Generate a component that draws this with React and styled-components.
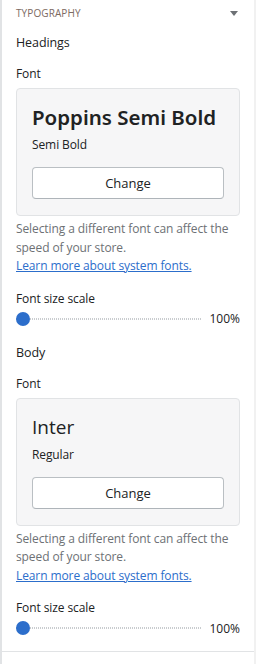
import styled, { createGlobalStyle } from "styled-components";

const GlobalStyle = createGlobalStyle`
	html, body {
		margin: 0;
		padding: 0;
		background: #f1f1f1;
	}
	body {
		font-family: "Open Sans", "Noto Sans", sans-serif;
		color: #202223;
	}
`;

function FontCard({ name, weight, heavy }) {
	return (
		<Card>
			<FontName $heavy={heavy}>{name}</FontName>
			<FontWeight>{weight}</FontWeight>
			<ChangeButton type="button">Change</ChangeButton>
		</Card>
	);
}

function Scale() {
	return (
		<SliderRow>
			<Track>
				<Thumb />
			</Track>
			<SliderValue>100%</SliderValue>
		</SliderRow>
	);
}

function FontGroup({ title, name, weight, heavy }) {
	return (
		<Group>
			<GroupTitle>{title}</GroupTitle>
			<Label>Font</Label>
			<FontCard name={name} weight={weight} heavy={heavy} />
			<Help>
				Selecting a different font can affect the speed of your store.
				<br />
				<a href="#fonts">Learn more about system fonts.</a>
			</Help>
			<Label $tight>Font size scale</Label>
			<Scale />
		</Group>
	);
}

function App() {
	return (
		<>
			<GlobalStyle />
			<Panel>
				<Header>
					<span>Typography</span>
					<Caret />
				</Header>
				<FontGroup title="Headings" name="Poppins Semi Bold" weight="Semi Bold" heavy />
				<FontGroup title="Body" name="Inter" weight="Regular" />
				<Divider />
			</Panel>
		</>
	);
}

const Panel = styled.div`
	width: 254px;
	height: 664px;
	box-sizing: border-box;
	background: #ffffff;
	border-left: 2px solid #e1e3e5;
	padding: 0 14px;
	overflow: hidden;
`;

const Header = styled.div`
	display: flex;
	justify-content: space-between;
	align-items: center;
	height: 26px;
	font-size: 10px;
	text-transform: uppercase;
	color: #7c6a62;
	letter-spacing: 0.1px;
`;

const Caret = styled.span`
	width: 0;
	height: 0;
	margin-right: 2px;
	border-left: 4px solid transparent;
	border-right: 4px solid transparent;
	border-top: 5px solid #6d7175;
`;

const Group = styled.div`
	display: flex;
	flex-direction: column;
`;

const GroupTitle = styled.div`
	font-size: 12.5px;
	line-height: 18px;
	margin-top: 8px;
	font-weight: 500;
	letter-spacing: -0.1px;
`;

const Label = styled.div`
	font-size: 12px;
	line-height: 18px;
	letter-spacing: -0.1px;
	margin-top: ${(p) => (p.$tight ? "14px" : "13px")};
	margin-bottom: ${(p) => (p.$tight ? "2px" : "5px")};
`;

const Card = styled.div`
	display: flex;
	flex-direction: column;
	background: #f6f6f7;
	border: 1px solid #e1e3e5;
	border-radius: 4px;
	padding: 14px 15px 16px;
`;

const FontName = styled.div`
	font-family: ${(p) => (p.$heavy ? '"Noto Sans", sans-serif' : '"Open Sans", sans-serif')};
	font-weight: ${(p) => (p.$heavy ? 600 : 400)};
	font-size: ${(p) => (p.$heavy ? "20.5px" : "19px")};
	line-height: 28px;
	color: #202223;
`;

const FontWeight = styled.div`
	font-size: 12px;
	line-height: 16px;
	letter-spacing: -0.1px;
	margin-top: 6px;
`;

const ChangeButton = styled.button`
	margin-top: 14px;
	height: 32px;
	background: #ffffff;
	border: 1px solid #babfc3;
	border-bottom-color: #aeb4b9;
	border-radius: 4px;
	font-family: inherit;
	font-size: 13px;
	color: #202223;
`;

const Help = styled.div`
	font-size: 12px;
	line-height: 18.5px;
	letter-spacing: -0.1px;
	color: #6d7175;
	margin-top: 4px;
	a {
		color: #2c6ecb;
		text-decoration: underline;
	}
`;

const SliderRow = styled.div`
	display: flex;
	align-items: center;
	gap: 7px;
	height: 18px;
	margin-bottom: 8px;
`;

const Track = styled.div`
	flex: 1;
	height: 2px;
	background-image: linear-gradient(to right, #c9cccf 50%, transparent 50%);
	background-size: 2px 2px;
	background-repeat: repeat-x;
	display: flex;
	align-items: center;
`;

const Thumb = styled.div`
	width: 14px;
	height: 14px;
	border-radius: 50%;
	background: #2c6ecb;
	flex: none;
`;

const SliderValue = styled.div`
	font-size: 12px;
	color: #202223;
	width: 31px;
	text-align: right;
`;

const Divider = styled.div`
	border-top: 1px solid #e1e3e5;
	margin: 6px -14px 0;
`;

export default App;
